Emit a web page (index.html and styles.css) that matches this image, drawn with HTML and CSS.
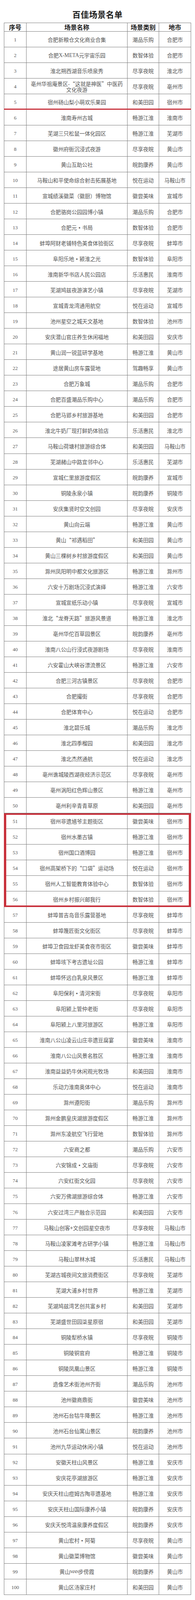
FILE: index.html
```html
<!DOCTYPE html>
<html lang="zh-CN">
<head>
<meta charset="utf-8">
<title>百佳场景名单</title>
<link rel="stylesheet" href="styles.css">
</head>
<body>
<h1 class="title">百佳场景名单</h1>
<div class="table">
<div class="r head"><span>序号</span><span>场景名称</span><span>场景类别</span><span>地市</span></div>
<div class="r"><span class="num">1</span><span class="name">合肥新粮仓文化商业合集</span><span>潮品乐购</span><span>合肥市</span></div>
<div class="r"><span class="num">2</span><span class="name">合肥<i class="lat">X-META</i>元宇宙乐园</span><span>数智体验</span><span>合肥市</span></div>
<div class="r"><span class="num">3</span><span class="name">淮北朔西湖音乐喷泉秀</span><span>尽享夜皖</span><span>淮北市</span></div>
<div class="r"><span class="num">4</span><span class="name">亳州华祖庵景区-“这就是神医”中医药文化夜游</span><span>尽享夜皖</span><span>亳州市</span></div>
<div class="r mark"><span class="num">5</span><span class="name">宿州砀山梨小萌欢乐果园</span><span>和美田园</span><span>宿州市</span></div>
<div class="r"><span class="num">6</span><span class="name">淮南寿州古城</span><span>畅游江淮</span><span>淮南市</span></div>
<div class="r"><span class="num">7</span><span class="name">芜湖三只松鼠一体化园区</span><span>畅游江淮</span><span>芜湖市</span></div>
<div class="r"><span class="num">8</span><span class="name">徽州府衙沉浸式夜游</span><span>尽享夜皖</span><span>黄山市</span></div>
<div class="r"><span class="num">9</span><span class="name">黄山互助公社</span><span>皖韵康养</span><span>黄山市</span></div>
<div class="r"><span class="num">10</span><span class="name">马鞍山和平使命综合射击拓展基地</span><span>悦在运动</span><span>马鞍山市</span></div>
<div class="r"><span class="num">11</span><span class="name">宣城绩溪徽菜（徽厨）博物馆</span><span>徽尝美味</span><span>宣城市</span></div>
<div class="r"><span class="num">12</span><span class="name">合肥骆岗公园园博小镇</span><span>潮品乐购</span><span>合肥市</span></div>
<div class="r"><span class="num">13</span><span class="name">合肥元<b class="dot">·</b>书局</span><span>数智体验</span><span>合肥市</span></div>
<div class="r"><span class="num">14</span><span class="name">蚌埠阿财老铺特色美食体验街区</span><span>尽享夜皖</span><span>蚌埠市</span></div>
<div class="r"><span class="num">15</span><span class="name">阜阳乐地<b class="dot">·</b>颍淮之光</span><span>数智体验</span><span>阜阳市</span></div>
<div class="r"><span class="num">16</span><span class="name">淮南新华书店人民公园店</span><span>乐活惠民</span><span>淮南市</span></div>
<div class="r"><span class="num">17</span><span class="name">芜湖鸠兹夜游演艺小镇</span><span>尽享夜皖</span><span>芜湖市</span></div>
<div class="r"><span class="num">18</span><span class="name">宣城青龙湾通用航空</span><span>悦在运动</span><span>宣城市</span></div>
<div class="r"><span class="num">19</span><span class="name">池州星空之城天文基地</span><span>数智体验</span><span>池州市</span></div>
<div class="r"><span class="num">20</span><span class="name">安庆潜山官庄养生休闲福地</span><span>和美田园</span><span>安庆市</span></div>
<div class="r"><span class="num">21</span><span class="name">黄山润一锐蓝研学基地</span><span>畅游江淮</span><span>黄山市</span></div>
<div class="r"><span class="num">22</span><span class="name">途居黄山房车露营地</span><span>驾趣畅享</span><span>黄山市</span></div>
<div class="r"><span class="num">23</span><span class="name">合肥万象城</span><span>潮品乐购</span><span>合肥市</span></div>
<div class="r"><span class="num">24</span><span class="name">合肥百盛潮品乐购中心</span><span>潮品乐购</span><span>合肥市</span></div>
<div class="r"><span class="num">25</span><span class="name">合肥马郢乡村旅游基地</span><span>和美田园</span><span>合肥市</span></div>
<div class="r"><span class="num">26</span><span class="name">淮北牛奶厂现打鲜奶体验店</span><span>乐活惠民</span><span>淮北市</span></div>
<div class="r"><span class="num">27</span><span class="name">马鞍山荷塘村旅游综合体</span><span>和美田园</span><span>马鞍山市</span></div>
<div class="r"><span class="num">28</span><span class="name">芜湖赭山中路宜邻中心</span><span>乐活惠民</span><span>芜湖市</span></div>
<div class="r"><span class="num">29</span><span class="name">宣城仁里旅游度假区</span><span>皖韵康养</span><span>宣城市</span></div>
<div class="r"><span class="num">30</span><span class="name">铜陵永泉小镇</span><span>皖韵康养</span><span>铜陵市</span></div>
<div class="r"><span class="num">31</span><span class="name">安庆集贤时空文创园</span><span>尽享夜皖</span><span>安庆市</span></div>
<div class="r"><span class="num">32</span><span class="name">黄山向云端</span><span>畅游江淮</span><span>黄山市</span></div>
<div class="r"><span class="num">33</span><span class="name">黄山“祁遇稻田”</span><span>和美田园</span><span>黄山市</span></div>
<div class="r"><span class="num">34</span><span class="name">黄山三棵树乡村旅游度假区</span><span>和美田园</span><span>黄山市</span></div>
<div class="r"><span class="num">35</span><span class="name">滁州凤阳明中都文化旅游区</span><span>畅游江淮</span><span>滁州市</span></div>
<div class="r"><span class="num">36</span><span class="name">六安十万剧场沉浸式演绎</span><span>畅游江淮</span><span>六安市</span></div>
<div class="r"><span class="num">37</span><span class="name">宣城宣纸乐动小镇</span><span>尽享夜皖</span><span>宣城市</span></div>
<div class="r"><span class="num">38</span><span class="name">淮北“龙脊天路”旅游风景道</span><span>畅游江淮</span><span>淮北市</span></div>
<div class="r"><span class="num">39</span><span class="name">亳州华佗百草园景区</span><span>皖韵康养</span><span>亳州市</span></div>
<div class="r"><span class="num">40</span><span class="name">淮南八公山行浸式夜游剧场</span><span>尽享夜皖</span><span>淮南市</span></div>
<div class="r"><span class="num">41</span><span class="name">六安霍山大峡谷漂流景区</span><span>畅游江淮</span><span>六安市</span></div>
<div class="r"><span class="num">42</span><span class="name">合肥三河古镇景区</span><span>尽享夜皖</span><span>合肥市</span></div>
<div class="r"><span class="num">43</span><span class="name">合肥撮街</span><span>尽享夜皖</span><span>合肥市</span></div>
<div class="r"><span class="num">44</span><span class="name">合肥体育中心</span><span>悦在运动</span><span>合肥市</span></div>
<div class="r"><span class="num">45</span><span class="name">淮北碧乐城</span><span>潮品乐购</span><span>淮北市</span></div>
<div class="r"><span class="num">46</span><span class="name">淮北四季榴园</span><span>和美田园</span><span>淮北市</span></div>
<div class="r"><span class="num">47</span><span class="name">淮北杰然通航</span><span>悦在运动</span><span>淮北市</span></div>
<div class="r"><span class="num">48</span><span class="name">亳州谯城陵西湖夜经济示范区</span><span>尽享夜皖</span><span>亳州市</span></div>
<div class="r"><span class="num">49</span><span class="name">亳州涡阳红色辉山景区</span><span>畅游江淮</span><span>亳州市</span></div>
<div class="r"><span class="num">50</span><span class="name">亳州利辛青青草原</span><span>和美田园</span><span>亳州市</span></div>
<div class="hl">
<div class="r"><span class="num">51</span><span class="name">宿州非遗馗爷主题街区</span><span>徽尝美味</span><span>宿州市</span></div>
<div class="r"><span class="num">52</span><span class="name">宿州水墨古镇</span><span>畅游江淮</span><span>宿州市</span></div>
<div class="r"><span class="num">53</span><span class="name">宿州国口酒博园</span><span>畅游江淮</span><span>宿州市</span></div>
<div class="r"><span class="num">54</span><span class="name">宿州高架桥下的“口袋”运动场</span><span>悦在运动</span><span>宿州市</span></div>
<div class="r"><span class="num">55</span><span class="name">宿州人工智能教育体验中心</span><span>数智体验</span><span>宿州市</span></div>
<div class="r"><span class="num">56</span><span class="name">宿州乡村振兴邮我行</span><span>数智体验</span><span>宿州市</span></div>
</div>
<div class="r"><span class="num">57</span><span class="name">蚌埠普吉岛音乐露营基地</span><span>尽享夜皖</span><span>蚌埠市</span></div>
<div class="r"><span class="num">58</span><span class="name">蚌埠篾匠街文化街区</span><span>尽享夜皖</span><span>蚌埠市</span></div>
<div class="r"><span class="num">59</span><span class="name">蚌埠卫食园龙虾美食夜市街区</span><span>徽尝美味</span><span>蚌埠市</span></div>
<div class="r"><span class="num">60</span><span class="name">蚌埠垓下考古遗址公园</span><span>畅游江淮</span><span>蚌埠市</span></div>
<div class="r"><span class="num">61</span><span class="name">蚌埠怀远白乳泉风景区</span><span>畅游江淮</span><span>蚌埠市</span></div>
<div class="r"><span class="num">62</span><span class="name">阜阳保利<b class="dot">·</b>清河宋街</span><span>尽享夜皖</span><span>阜阳市</span></div>
<div class="r"><span class="num">63</span><span class="name">阜阳颍上管仲老街</span><span>尽享夜皖</span><span>阜阳市</span></div>
<div class="r"><span class="num">64</span><span class="name">阜阳颍上八里河旅游区</span><span>畅游江淮</span><span>阜阳市</span></div>
<div class="r"><span class="num">65</span><span class="name">淮南八公山凌云山庄非遗豆腐宴</span><span>徽尝美味</span><span>淮南市</span></div>
<div class="r"><span class="num">66</span><span class="name">淮南八公山风景名胜区</span><span>畅游江淮</span><span>淮南市</span></div>
<div class="r"><span class="num">67</span><span class="name">淮南益益奶牛休闲观光牧场</span><span>和美田园</span><span>淮南市</span></div>
<div class="r"><span class="num">68</span><span class="name">乐动力淮南奥体中心</span><span>悦在运动</span><span>淮南市</span></div>
<div class="r"><span class="num">69</span><span class="name">滁州遵阳街</span><span>潮品乐购</span><span>滁州市</span></div>
<div class="r"><span class="num">70</span><span class="name">滁州金鹏皇庆湖旅游度假区</span><span>畅游江淮</span><span>滁州市</span></div>
<div class="r"><span class="num">71</span><span class="name">滁州东凌航空飞行营地</span><span>数智体验</span><span>滁州市</span></div>
<div class="r"><span class="num">72</span><span class="name">六安商之都</span><span>潮品乐购</span><span>六安市</span></div>
<div class="r"><span class="num">73</span><span class="name">六安锦成<b class="dot">·</b>文庙街</span><span>尽享夜皖</span><span>六安市</span></div>
<div class="r"><span class="num">74</span><span class="name">六安红街文化园</span><span>尽享夜皖</span><span>六安市</span></div>
<div class="r"><span class="num">75</span><span class="name">六安万佛湖旅游综合体</span><span>畅游江淮</span><span>六安市</span></div>
<div class="r"><span class="num">76</span><span class="name">六安过湾三产融合示范园</span><span>和美田园</span><span>六安市</span></div>
<div class="r"><span class="num">77</span><span class="name">马鞍山创客+文创园星空夜市</span><span>尽享夜皖</span><span>马鞍山市</span></div>
<div class="r"><span class="num">78</span><span class="name">马鞍山凌家滩考古研学小镇</span><span>畅游江淮</span><span>马鞍山市</span></div>
<div class="r"><span class="num">79</span><span class="name">马鞍山翠林水城</span><span>乐活惠民</span><span>马鞍山市</span></div>
<div class="r"><span class="num">80</span><span class="name">芜湖古城夜间文旅消费街区</span><span>尽享夜皖</span><span>芜湖市</span></div>
<div class="r"><span class="num">81</span><span class="name">芜湖大浦乡村世界</span><span>畅游江淮</span><span>芜湖市</span></div>
<div class="r"><span class="num">82</span><span class="name">芜湖鸠兹湾艺创共富乡村</span><span>和美田园</span><span>芜湖市</span></div>
<div class="r"><span class="num">83</span><span class="name">芜湖盛世田园柒星原宿</span><span>和美田园</span><span>芜湖市</span></div>
<div class="r"><span class="num">84</span><span class="name">铜陵犁桥水镇</span><span>尽享夜皖</span><span>铜陵市</span></div>
<div class="r"><span class="num">85</span><span class="name">铜陵铜官府</span><span>畅游江淮</span><span>铜陵市</span></div>
<div class="r"><span class="num">86</span><span class="name">铜陵凤凰山景区</span><span>畅游江淮</span><span>铜陵市</span></div>
<div class="r"><span class="num">87</span><span class="name">造像艺术街池州齐街</span><span>潮品乐购</span><span>池州市</span></div>
<div class="r"><span class="num">88</span><span class="name">池州徽商鼎街</span><span>徽尝美味</span><span>池州市</span></div>
<div class="r"><span class="num">89</span><span class="name">池州石台牯牛降景区</span><span>畅游江淮</span><span>池州市</span></div>
<div class="r"><span class="num">90</span><span class="name">池州石台仙寓山景区</span><span>皖韵康养</span><span>池州市</span></div>
<div class="r"><span class="num">91</span><span class="name">池州九华运动休闲小镇</span><span>悦在运动</span><span>池州市</span></div>
<div class="r"><span class="num">92</span><span class="name">安徽天柱山风景区</span><span>畅游江淮</span><span>安庆市</span></div>
<div class="r"><span class="num">93</span><span class="name">安庆花亭湖旅游区</span><span>畅游江淮</span><span>安庆市</span></div>
<div class="r"><span class="num">94</span><span class="name">安庆天柱山痘姆古陶非遗基地</span><span>畅游江淮</span><span>安庆市</span></div>
<div class="r"><span class="num">95</span><span class="name">安庆天柱山国际康养小镇</span><span>皖韵康养</span><span>安庆市</span></div>
<div class="r"><span class="num">96</span><span class="name">安庆天悦湾温泉康养度假区</span><span>皖韵康养</span><span>安庆市</span></div>
<div class="r"><span class="num">97</span><span class="name">黄山宏村<b class="dot">·</b>阿菊</span><span>尽享夜皖</span><span>黄山市</span></div>
<div class="r"><span class="num">98</span><span class="name">黄山徽菜博物馆</span><span>徽尝美味</span><span>黄山市</span></div>
<div class="r"><span class="num">99</span><span class="name">黄山<i class="lat narrow">MAN</i>步傍霞</span><span>皖韵康养</span><span>黄山市</span></div>
<div class="r"><span class="num">100</span><span class="name">黄山区汤家庄村</span><span>和美田园</span><span>黄山市</span></div>
</div>
</body>
</html>
```

FILE: styles.css
```css
html, body {
  margin: 0;
  padding: 0;
  background: #ffffff;
}

body {
  font-family: "Noto Sans CJK SC", "Noto Sans", sans-serif;
  color: #555555;
}

.title {
  margin: 0;
  padding: 25px 0 10.3px;
  height: 22.4px;
  line-height: 22.4px;
  font-size: 21px;
  font-weight: 700;
  text-align: center;
  color: #1a1a1a;
  letter-spacing: 0.5px;
}

.table {
  margin-left: 10px;
  width: 480px;
  box-sizing: border-box;
  border: 1px solid #7a7a7a;
  border-bottom: none;
}

.r {
  position: relative;
  display: grid;
  grid-template-columns: 57px 259px 81px 81px;
  height: 40.03px;
  box-sizing: border-box;
  border-bottom: 1px solid #7a7a7a;
}

.r > span {
  display: flex;
  align-items: center;
  justify-content: center;
  min-height: 0;
  text-align: center;
  box-sizing: border-box;
  padding-top: 2.5px;
  border-right: 1px solid #7a7a7a;
  font-size: 13.6px;
  line-height: 15px;
  color: #555555;
}

.r > span:last-child {
  border-right: none;
}

.r > .name {
  padding-left: 6px;
  padding-right: 6px;
}

.r > .num {
  font-family: "Liberation Serif", "Times New Roman", serif;
  font-size: 13px;
}

.r.head {
  height: 22.4px;
}

.r.head > span {
  padding-top: 0;
  font-size: 16px;
  font-weight: 700;
  color: #1a1a1a;
}

.lat {
  font-style: normal;
  font-family: "Liberation Serif", "Times New Roman", serif;
}

.lat.narrow {
  letter-spacing: -1.5px;
  font-size: 11px;
}

.dot {
  display: inline-block;
  width: 1em;
  text-align: center;
  font-weight: 700;
}

.r.mark::after {
  content: "";
  position: absolute;
  left: -1px;
  right: -1px;
  bottom: -1px;
  height: 3.5px;
  background: #c8313c;
}

.hl {
  position: relative;
}

.hl::after {
  content: "";
  position: absolute;
  top: 0;
  bottom: 0;
  left: -1px;
  right: -1px;
  border-style: solid;
  border-color: #c8313c;
  border-width: 4.3px 6px;
  pointer-events: none;
}
```
